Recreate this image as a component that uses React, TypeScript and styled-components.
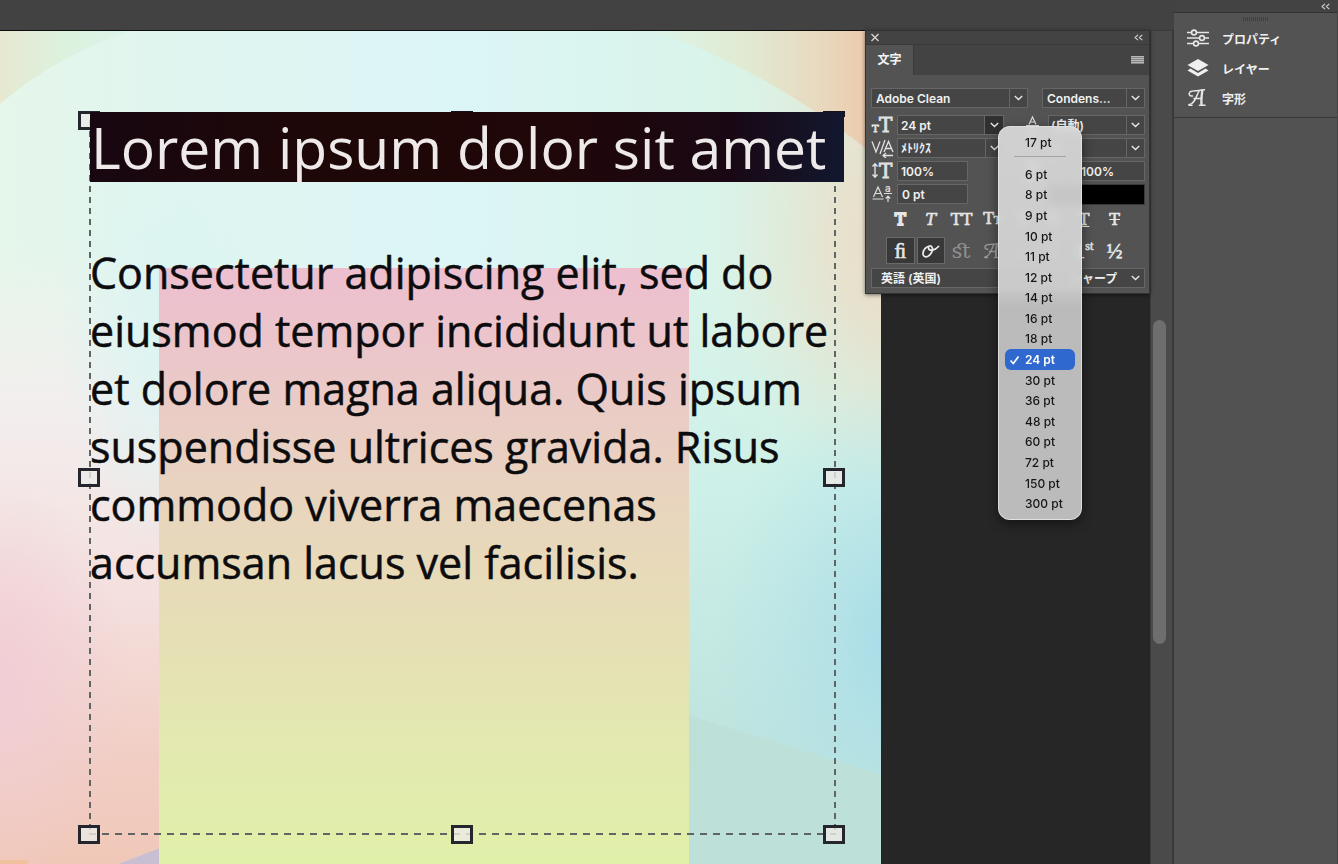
import React, { useState } from "react";
import styled, { createGlobalStyle, css } from "styled-components";

const ui = `Inter, "Noto Sans CJK JP", sans-serif`;
const slab = `"DejaVu Serif", "Liberation Serif", serif`;

const Global = createGlobalStyle`
  * { box-sizing: border-box; }
  body { margin: 0; background: #262626; font-family: ${ui}; color: #f0f0f0; }
  button, input, select { font: inherit; color: inherit; }
`;

const Shell = styled.div`
  display: flex;
  min-height: 100vh;
`;
const Main = styled.main`
  flex: 1;
  min-width: 0;
  display: flex;
  flex-direction: column;
`;
const OptionsBar = styled.header`
  height: 30px;
  background: #424242;
`;
const Workspace = styled.div`
  position: relative;
  flex: 1;
  display: flex;
`;
const Artboard = styled.section`
  position: relative;
  flex: 1;
  min-width: 0;
  padding: 81px 46px 30px 90px;
  border-top: 1px solid #0c0c0c;
  display: flex;
  overflow: hidden;
`;
const Artwork = styled.svg`
  position: absolute;
  inset: 0;
  width: 100%;
  height: 100%;
`;
const Pasteboard = styled.div`
  width: 269px;
  background: #262626;
`;
const Gutter = styled.div`
  width: 24px;
  background: #4a4a4a;
  border-left: 1px solid #3a3a3a;
  border-top: 1px solid #3a3a3a;
  border-right: 2px solid #393939;
  padding: 289px 5px 0 2px;
`;
const Thumb = styled.div`
  width: 13px;
  height: 324px;
  border-radius: 7px;
  background: #6e6e6e;
`;

/* Text frame */
const Frame = styled.div`
  position: relative;
  flex: 1;
  font-family: "Open Sans", "Noto Sans", sans-serif;
  color: #0c0c0e;
`;
const dash = (dir: string, on: number, pitch: number) =>
  `repeating-linear-gradient(${dir}, #5f6465 0 ${on}px, transparent ${on}px ${pitch}px)`;
const Dashes = styled.div`
  position: absolute;
  inset: 8px -1px -1px -1px;
  background:
    ${dash("to bottom", 6, 11)} left / 2px 100% no-repeat,
    ${dash("to bottom", 6, 11)} right / 2px 100% no-repeat,
    ${dash("to right", 7, 13)} bottom / 100% 2px no-repeat;
`;
const Handle = styled.span<{ $x: string; $y: string; $covered?: boolean }>`
  position: absolute;
  left: ${(p) => p.$x};
  top: ${(p) => p.$y};
  width: 22px;
  height: 19px;
  margin: -9px 0 0 -12px;
  border: 3px solid #25252e;
  background: rgba(236, 234, 230, 0.8);
  ${(p) =>
    p.$covered &&
    css`
      height: 6px;
      border-color: #15101a;
      background: #15101a;
    `}
`;
const Heading = styled.h1`
  position: relative;
  margin: 0 -9px 0 0;
  height: 70px;
  padding-left: 1px;
  background: linear-gradient(90deg, #180711, #1e0707 30%, #200709 62%, #190814 85%, #12182f);
  color: #efeaea;
  font-size: 57px;
  line-height: 70px;
  font-weight: 400;
  white-space: nowrap;
`;
const Copy = styled.p`
  position: relative;
  margin: 62px 0 0;
  font-size: 43px;
  font-weight: 400;
  line-height: 58px;
  white-space: nowrap;
  -webkit-text-stroke: 0.5px currentColor;
`;
const Line = styled.span`
  display: block;
`;

/* Character panel */
const Panel = styled.section`
  position: absolute;
  top: 0;
  right: 24px;
  width: 285px;
  height: 264px;
  background: #535353;
  border: 1px solid #333;
  box-shadow: 0 1px 4px rgba(0, 0, 0, 0.5);
  font-size: 12px;
  font-weight: 600;
`;
const TitleBar = styled.div`
  height: 14px;
  padding: 0 6px 0 4px;
  display: flex;
  align-items: center;
  justify-content: space-between;
  background: #434343;
  border-bottom: 1px solid #3a3a3a;
`;
const PlainButton = styled.button`
  border: 0;
  padding: 0;
  background: none;
  display: flex;
  align-items: center;
  justify-content: center;
`;
const TabBar = styled.div`
  height: 30px;
  display: flex;
  justify-content: space-between;
  background: #434343;
  padding-right: 5px;
`;
const Tab = styled.button`
  border: 0;
  border-right: 1px solid #3a3a3a;
  padding: 0 0 3px;
  width: 48px;
  background: #535353;
  color: #f4f4f4;
`;
const PanelBody = styled.div`
  padding: 13px 4px 0 5px;
`;
const Split = styled.div<{ $gap: number; $right: number }>`
  display: flex;
  gap: ${(p) => p.$gap}px;
  & > :first-child { flex: 1; }
  & > :last-child { width: ${(p) => p.$right}px; }
`;
const fieldBox = css`
  height: 20px;
  background: #454545;
  border: 1px solid #666;
`;
const SelectBox = styled.div`
  ${fieldBox}
  display: grid;
  grid-template-columns: 1fr 18px;
  align-items: center;
  min-width: 0;
`;
const Select = styled.select<{ $indent?: number }>`
  grid-area: 1 / 1 / 2 / 3;
  appearance: none;
  border: 0;
  outline: 0;
  min-width: 0;
  width: 100%;
  height: 18px;
  padding: 0 20px 0 ${(p) => p.$indent ?? 4}px;
  background: none;
  white-space: nowrap;
`;
const Arrow = styled.span<{ $plain?: boolean }>`
  grid-area: 1 / 2;
  height: 18px;
  display: flex;
  align-items: center;
  justify-content: center;
  border-left: 1px solid ${(p) => (p.$plain ? "transparent" : "#666")};
  pointer-events: none;
`;
const Fields = styled.div`
  margin-top: 7px;
  display: grid;
  grid-template-columns: 26px 107px 16px 28px 97px;
  grid-auto-rows: 20px;
  row-gap: 3px;
  align-items: center;
`;
const Combo = styled.div<{ $w?: number }>`
  ${fieldBox}
  position: relative;
  display: flex;
  width: ${(p) => (p.$w ? p.$w + "px" : "auto")};
`;
const TextInput = styled.input<{ $indent?: number }>`
  flex: 1;
  min-width: 0;
  width: 100%;
  border: 0;
  outline: 0;
  padding: 0 0 0 ${(p) => p.$indent ?? 3}px;
  background: none;
`;
const ComboButton = styled(PlainButton)<{ $open?: boolean }>`
  width: 19px;
  border-left: 1px solid #666;
  background: ${(p) => (p.$open ? "#303030" : "none")};
`;
const RightIcon = styled.div`
  grid-column: 4;
  height: 20px;
  padding-left: 2px;
`;
const RightCell = styled.div`
  grid-column: 5;
`;
const Swatch = styled.button`
  grid-column: 5;
  height: 21px;
  border: 1px solid #3a3a3a;
  background: #000;
`;
const Tools = styled.div`
  display: grid;
  grid-template-columns: repeat(8, 1fr);
  margin: 2px 15px 0 14px;
`;
const Tool = styled.button<{ $on?: boolean; $dim?: boolean; $heavy?: boolean }>`
  height: 27px;
  margin: 0 1px;
  padding: 0;
  border: 1px solid ${(p) => (p.$on ? "#6a6a6a" : "transparent")};
  background: ${(p) => (p.$on ? "#383838" : "none")};
  color: ${(p) => (p.$dim ? "#8f8f8f" : "#e6e6e6")};
  font-family: ${slab};
  font-size: 16px;
  line-height: 24px;
  font-weight: 400;
  display: flex;
  align-items: center;
  justify-content: center;
  -webkit-text-stroke: ${(p) => (p.$heavy ? "2px" : p.$dim ? "0" : "0.6px")} currentColor;
  small { font-size: 11px; }
  sup { font-size: 12px; line-height: 12px; }
`;
const OpenTypeTools = styled(Tools)`
  margin-top: 4px;
  ${Tool} { font-family: "Liberation Serif", "DejaVu Serif", serif; font-size: 21px; }
`;
const Footer = styled.div`
  margin-top: 4px;
`;

/* Size menu */
const Menu = styled.div`
  position: absolute;
  z-index: 2;
  left: 100px;
  top: 10px;
  width: 84px;
  height: 394px;
  padding: 5px 6px 5px;
  border-radius: 12px;
  border: 1px solid rgba(240, 240, 240, 0.6);
  background: linear-gradient(rgba(222, 222, 222, 0.9), rgba(216, 216, 216, 0.9) 41%, rgba(204, 204, 204, 0.9) 46%);
  backdrop-filter: blur(4px);
  box-shadow: 0 4px 12px rgba(0, 0, 0, 0.45);
  display: flex;
  flex-direction: column;
  font-size: 12px;
  font-weight: 500;
  color: #161616;
`;
const MenuRule = styled.hr`
  width: 52px;
  height: 1px;
  margin: 4px auto 7px;
  border: 0;
  background: #a4a4a4;
`;
const MenuList = styled.div`
  flex: 1;
  display: grid;
  grid-auto-rows: 1fr;
`;
const Option = styled.button<{ $on?: boolean }>`
  border: 0;
  min-height: 20px;
  padding: 0 0 0 4px;
  border-radius: 6px;
  display: grid;
  grid-template-columns: 16px 1fr;
  align-items: center;
  text-align: left;
  background: ${(p) => (p.$on ? "#2f68cf" : "none")};
  color: ${(p) => (p.$on ? "#fff" : "inherit")};
  font-weight: ${(p) => (p.$on ? 600 : 500)};
  white-space: nowrap;
  span { grid-column: 2; }
  svg { grid-column: 1; grid-row: 1; }
`;

/* Dock */
const Dock = styled.aside`
  width: 164px;
  background: #525252;
  border-right: 1px solid #444;
  font-size: 12px;
  font-weight: 600;
`;
const DockBar = styled.div`
  height: 13px;
  padding-right: 7px;
  display: flex;
  justify-content: flex-end;
  align-items: center;
  background: #434343;
  border-bottom: 1px solid #333;
`;
const DockGroup = styled.div`
  height: 105px;
  padding: 4px 0 0;
  background: #535353;
  border-bottom: 1px solid #393939;
`;
const Grip = styled.div`
  width: 25px;
  height: 4px;
  margin: 0 auto 2px;
  background: repeating-linear-gradient(90deg, #404040 0 1px, transparent 1px 2px);
`;
const DockItem = styled.button`
  width: 100%;
  height: 30px;
  border: 0;
  background: none;
  padding: 0 0 0 13px;
  display: grid;
  grid-template-columns: 35px 1fr;
  align-items: center;
  text-align: left;
`;

const Chevron = () => (
  <svg width="9" height="6" viewBox="0 0 9 6" fill="none" stroke="#e8e8e8" strokeWidth="1.4">
    <path d="M.8 1 4.5 4.6 8.2 1" />
  </svg>
);
const Collapse = () => (
  <svg width="9" height="7" viewBox="0 0 9 7" fill="none" stroke="#d4d4d4" strokeWidth="1.1">
    <path d="M4 .8 1 3.5l3 2.7M8.3.8l-3 2.7 3 2.7" />
  </svg>
);
const SvgText = ({ x, y, s, sans, children }: { x: number; y: number; s: number; sans?: boolean; children: string }) => (
  <text
    x={x}
    y={y}
    fontSize={s}
    fontWeight="400"
    fontFamily={sans ? "Inter, sans-serif" : slab}
    fill="#e2e2e2"
    stroke="#e2e2e2"
    strokeWidth={sans ? 0.2 : 0.8}
  >
    {children}
  </text>
);
const SizeIcon = () => (
  <svg width="23" height="20" viewBox="0 0 23 20" overflow="visible">
    <SvgText x={1} y={17} s={10}>T</SvgText>
    <SvgText x={8} y={17} s={20}>T</SvgText>
  </svg>
);
const KernIcon = () => (
  <svg width="25" height="20" viewBox="0 0 25 20" fill="none" stroke="#e2e2e2" strokeWidth="1.3">
    <path d="M1 3.5 5 14 9 3.5M14 2 9 16M13 14l4.500-10.500L22 14M14.500 10.500h6" />
    <path d="M12.500 17.500H22M15 15l-3 2.500 3 2.500" />
  </svg>
);
const VScaleIcon = () => (
  <svg width="24" height="20" viewBox="0 0 24 20" overflow="visible" fill="none" stroke="#e2e2e2" strokeWidth="1.4">
    <path d="M4 3v13M1.500 5.500 4 2.700l2.500 2.800M1.500 13.500 4 16.300l2.500-2.800" />
    <SvgText x={8} y={17} s={20}>T</SvgText>
  </svg>
);
const HScaleIcon = () => (
  <svg width="24" height="20" viewBox="0 0 24 20" fill="none" stroke="#e2e2e2" strokeWidth="1.4">
    <path d="M4 17.500h14M6 15.500l-2.500 2 2.500 2M16 15.500l2.500 2-2.500 2" />
    <SvgText x={5} y={14} s={16}>T</SvgText>
  </svg>
);
const BaselineIcon = () => (
  <svg width="24" height="20" viewBox="0 0 24 20" overflow="visible" fill="none" stroke="#dcdcdc" strokeWidth="1.2">
    <path d="M2.500 13 7 3l4.500 10M4 9.500h6M1.500 15h11M13 9.500h8M17 18v-5.500M14.800 14.500l2.200-2.300 2.200 2.300" />
    <SvgText x={14} y={8} s={10} sans>a</SvgText>
  </svg>
);
const LeadingIcon = () => (
  <svg width="22" height="20" viewBox="0 0 22 20" fill="none" stroke="#dcdcdc" strokeWidth="1.2">
    <path d="M7 9.500 10.500 2 14 9.500M8 7h5M4 10.500h13M7 18.500 10.500 12 14 18.500M4 19.500h13" />
  </svg>
);
const ScriptA = ({ size = 20, color = "#e6e6e6" }) => (
  <svg width={size} height={size} viewBox="0 0 20 20" fill="none" stroke={color} strokeWidth="1.500" strokeLinecap="round">
    <path d="M5.500 8C2.500 8.500 1 6 3 4 5 2 9 3 12 2.500s4-1 5.500-.8" />
    <path d="M12 3C9.500 7.500 7.500 17 2 16.500M7 10.500h7.500" />
    <path d="M15.300 2.500c-.6 5-1.300 9.500-.8 14" strokeWidth="2.300" />
    <path d="M12.500 17.300h5.500M2 17.300h3" />
  </svg>
);
const Swash = () => (
  <svg width="19" height="16" viewBox="0 0 19 16" fill="none" stroke="#ececec" strokeWidth="1.700" strokeLinecap="round">
    <path d="M8.500 3C5 3.500 2 7 2 10.500c0 3 2.500 4 5 2.700 3.500-2 5.500-6.500 4-9C9.700 2 7 3 7.500 5.200 8.300 8.500 14 7.500 17.500 3.500" />
  </svg>
);
const Sliders = () => (
  <svg width="22" height="18" viewBox="0 0 22 18" fill="none" stroke="#e6e6e6" strokeWidth="1.600">
    <path d="M0 3.500h4.500M9.500 3.500H22M0 9h12.500M17.500 9H22M0 14.500h6.500M11.500 14.500H22" />
    <circle cx="7" cy="3.500" r="2.400" />
    <circle cx="15" cy="9" r="2.400" />
    <circle cx="9" cy="14.500" r="2.400" />
  </svg>
);
const Layers = () => (
  <svg width="22" height="20" viewBox="0 0 22 20" fill="#f0f0f0">
    <path d="M11 1 21.500 7 11 13 .5 7z" />
    <path d="M3.500 10.500.5 12.500 11 18.500l10.500-6-3-2L11 15z" />
  </svg>
);

const SIZES = [6, 8, 9, 10, 11, 12, 14, 16, 18, 24, 30, 36, 48, 60, 72, 150, 300];
const COPY = [
  "Consectetur adipiscing elit, sed do",
  "eiusmod tempor incididunt ut labore",
  "et dolore magna aliqua. Quis ipsum",
  "suspendisse ultrices gravida. Risus",
  "commodo viverra maecenas",
  "accumsan lacus vel facilisis.",
];

const Art = () => (
  <Artwork viewBox="0 0 881 833" preserveAspectRatio="none" aria-hidden="true">
    <defs>
      <linearGradient id="sky">
        <stop offset="0" stopColor="#e5f6ea" />
        <stop offset=".22" stopColor="#e0f5f0" />
        <stop offset=".5" stopColor="#dcf5f7" />
        <stop offset=".8" stopColor="#d9f4ea" />
        <stop offset="1" stopColor="#deeedc" />
      </linearGradient>
      <linearGradient id="warm" x2="0" y2="1">
        <stop offset=".25" stopColor="#f2f1ec" stopOpacity="0" />
        <stop offset=".45" stopColor="#f3eeee" />
        <stop offset=".68" stopColor="#f4e0de" />
        <stop offset=".88" stopColor="#f1cdc3" />
        <stop offset="1" stopColor="#f0c8b8" />
      </linearGradient>
      <linearGradient id="cool" x2="0" y2="1">
        <stop offset=".3" stopColor="#d0f2e8" stopOpacity="0" />
        <stop offset=".55" stopColor="#cdf0e8" />
        <stop offset=".85" stopColor="#bfe4df" />
      </linearGradient>
      <linearGradient id="card" x2="0" y2="1">
        <stop offset="0" stopColor="#edbfcf" />
        <stop offset=".14" stopColor="#ebc6ca" />
        <stop offset=".42" stopColor="#e8d6bd" />
        <stop offset=".6" stopColor="#e6deb5" />
        <stop offset=".8" stopColor="#e3e9b0" />
        <stop offset="1" stopColor="#e0f0a9" />
      </linearGradient>
      <radialGradient id="rose">
        <stop offset="0" stopColor="#f1cdd5" />
        <stop offset="1" stopColor="#f1cdd5" stopOpacity="0" />
      </radialGradient>
      <radialGradient id="mint">
        <stop offset="0" stopColor="#daf5f3" />
        <stop offset="1" stopColor="#daf5f3" stopOpacity="0" />
      </radialGradient>
      <radialGradient id="sand">
        <stop offset="0" stopColor="#ecdac2" />
        <stop offset=".4" stopColor="#eaddc8" stopOpacity=".7" />
        <stop offset="1" stopColor="#e6e6d2" stopOpacity="0" />
      </radialGradient>
      <radialGradient id="aqua">
        <stop offset="0" stopColor="#a6dce9" />
        <stop offset="1" stopColor="#b4e2e8" stopOpacity="0" />
      </radialGradient>
      <linearGradient id="tl">
        <stop offset="0" stopColor="#e7e8d0" />
        <stop offset=".5" stopColor="#dcf2df" />
        <stop offset="1" stopColor="#dcf5ea" />
      </linearGradient>
      <linearGradient id="tr">
        <stop offset="0" stopColor="#dcf5e8" />
        <stop offset=".45" stopColor="#e2e8cf" />
        <stop offset=".75" stopColor="#e8d8bd" />
        <stop offset="1" stopColor="#eec6a8" />
      </linearGradient>
    </defs>
    <rect width="881" height="833" fill="url(#sky)" />
    <rect width="160" height="833" fill="url(#warm)" />
    <rect x="688" width="193" height="833" fill="url(#cool)" />
    <ellipse cx="170" cy="300" rx="110" ry="230" fill="url(#mint)" />
    <ellipse cx="0" cy="650" rx="130" ry="200" fill="url(#rose)" />
    <ellipse cx="910" cy="210" rx="190" ry="260" fill="url(#sand)" />
    <ellipse cx="900" cy="610" rx="190" ry="260" fill="url(#aqua)" />
    <path d="M0 0H132Q60 22 0 73z" fill="url(#tl)" />
    <path d="M655 0H881V130Q780 45 655 0z" fill="url(#tr)" />
    <path d="M688 684 881 744V833H688z" fill="#bde1d8" />
    <path d="M118 833 160 817V833z" fill="#c9bfd2" />
    <path d="M0 829h28v4H0z" fill="#f2bd8c" opacity=".6" />
    <rect x="159" y="237" width="530" height="596" fill="url(#card)" />
  </Artwork>
);

export default function App() {
  const [size, setSize] = useState(24);
  return (
    <Shell>
      <Global />
      <Main>
        <OptionsBar />
        <Workspace>
          <Artboard>
            <Art />
            <Frame>
              <Dashes />
              <Handle $x="0px" $y="8px" />
              <Handle $x="50%" $y="8px" $covered />
              <Handle $x="100%" $y="8px" $covered />
              <Heading>Lorem ipsum dolor sit amet</Heading>
              <Copy>{COPY.map((l) => <Line key={l}>{l}</Line>)}</Copy>
              <Handle $x="0px" $y="calc(50% + 4px)" />
              <Handle $x="100%" $y="calc(50% + 4px)" />
              <Handle $x="0px" $y="100%" />
              <Handle $x="50%" $y="100%" />
              <Handle $x="100%" $y="100%" />
            </Frame>
          </Artboard>
          <Pasteboard />
          <Gutter><Thumb /></Gutter>
          <Panel aria-label="文字">
            <TitleBar>
              <PlainButton aria-label="閉じる">
                <svg width="10" height="9" viewBox="0 0 10 9" stroke="#d8d8d8" strokeWidth="1.300"><path d="m1.500 1 7 7M8.500 1l-7 7" /></svg>
              </PlainButton>
              <PlainButton aria-label="折りたたむ"><Collapse /></PlainButton>
            </TitleBar>
            <TabBar>
              <Tab>文字</Tab>
              <PlainButton aria-label="パネルメニュー">
                <svg width="13" height="8" viewBox="0 0 13 8" stroke="#b8b8b8">
                  <path d="M0 0h13v8H0z" fill="#858585" stroke="none" />
                  <path d="M0 .5h13M0 2.500h13M0 4.500h13M0 6.500h13" />
                </svg>
              </PlainButton>
            </TabBar>
            <PanelBody>
              <Split $gap={14} $right={103}>
                <SelectBox>
                  <Select aria-label="フォント"><option>Adobe Clean</option></Select>
                  <Arrow><Chevron /></Arrow>
                </SelectBox>
                <SelectBox>
                  <Select aria-label="スタイル"><option>Condens…</option></Select>
                  <Arrow><Chevron /></Arrow>
                </SelectBox>
              </Split>
              <Fields>
                <SizeIcon />
                <Combo>
                  <TextInput aria-label="フォントサイズ" value={`${size} pt`} readOnly />
                  <ComboButton $open aria-label="サイズを選択"><Chevron /></ComboButton>
                  <Menu>
                    <Option><span>17 pt</span></Option>
                    <MenuRule />
                    <MenuList>
                      {SIZES.map((s) => (
                        <Option key={s} $on={s === size} onClick={() => setSize(s)}>
                          {s === size && (
                            <svg width="11" height="10" viewBox="0 0 11 10" fill="none" stroke="#fff" strokeWidth="1.700"><path d="m1.500 5.500 2.800 3L9.500 1.500" /></svg>
                          )}
                          <span>{s} pt</span>
                        </Option>
                      ))}
                    </MenuList>
                  </Menu>
                </Combo>
                <RightIcon><LeadingIcon /></RightIcon>
                <SelectBox>
                  <Select $indent={2} aria-label="行送り"><option>(自動)</option></Select>
                  <Arrow><Chevron /></Arrow>
                </SelectBox>

                <KernIcon />
                <SelectBox>
                  <Select $indent={3} aria-label="カーニング"><option>ﾒﾄﾘｸｽ</option></Select>
                  <Arrow><Chevron /></Arrow>
                </SelectBox>
                <RightCell>
                  <SelectBox>
                    <Select aria-label="トラッキング"><option>0</option></Select>
                    <Arrow><Chevron /></Arrow>
                  </SelectBox>
                </RightCell>

                <VScaleIcon />
                <Combo $w={71}><TextInput aria-label="垂直比率" defaultValue="100%" /></Combo>
                <RightIcon><HScaleIcon /></RightIcon>
                <Combo><TextInput $indent={32} aria-label="水平比率" defaultValue="100%" /></Combo>

                <BaselineIcon />
                <Combo $w={71}><TextInput $indent={4} aria-label="ベースライン" defaultValue="0 pt" /></Combo>
                <Swatch aria-label="カラー" />
              </Fields>
              <Tools>
                <Tool $heavy aria-label="太字">T</Tool>
                <Tool aria-label="斜体"><i>T</i></Tool>
                <Tool aria-label="オールキャップス">TT</Tool>
                <Tool aria-label="スモールキャップス"><span>T<small>T</small></span></Tool>
                <Tool aria-label="上付き">T</Tool>
                <Tool aria-label="下付き">T.</Tool>
                <Tool aria-label="下線"><u>T</u></Tool>
                <Tool aria-label="取り消し線"><s>T</s></Tool>
              </Tools>
              <OpenTypeTools>
                <Tool $on aria-label="合字">ﬁ</Tool>
                <Tool $on aria-label="コンテキスト"><Swash /></Tool>
                <Tool $dim aria-label="任意の合字">ﬆ</Tool>
                <Tool $dim aria-label="スワッシュ"><ScriptA size={18} color="#9b9b9b" /></Tool>
                <Tool $dim aria-label="デザインのバリエーション">a</Tool>
                <Tool $dim aria-label="タイトル">T</Tool>
                <Tool aria-label="上付き序数表記"><span>1<sup>st</sup></span></Tool>
                <Tool aria-label="スラッシュ分数">½</Tool>
              </OpenTypeTools>
              <Footer>
                <Split $gap={8} $right={84}>
                  <SelectBox>
                    <Select $indent={9} aria-label="言語"><option>英語 (英国)</option></Select>
                    <Arrow $plain><Chevron /></Arrow>
                  </SelectBox>
                  <SelectBox>
                    <Select $indent={8} aria-label="アンチエイリアス"><option>シャープ</option></Select>
                    <Arrow $plain><Chevron /></Arrow>
                  </SelectBox>
                </Split>
              </Footer>
            </PanelBody>
          </Panel>
        </Workspace>
      </Main>
      <Dock>
        <DockBar><PlainButton aria-label="折りたたむ"><Collapse /></PlainButton></DockBar>
        <DockGroup>
          <Grip />
          <DockItem><Sliders />プロパティ</DockItem>
          <DockItem><Layers />レイヤー</DockItem>
          <DockItem><ScriptA />字形</DockItem>
        </DockGroup>
      </Dock>
    </Shell>
  );
}
